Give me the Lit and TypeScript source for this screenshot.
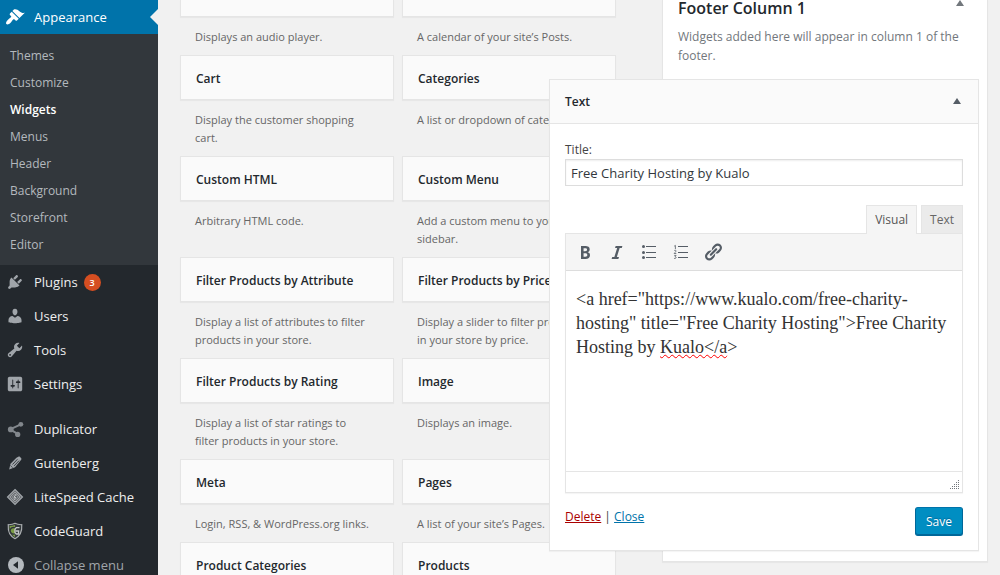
import { LitElement, html, css, svg, nothing } from 'lit';
import { customElement, property, state } from 'lit/decorators.js';
import { classMap } from 'lit/directives/class-map.js';

const icon = (body: unknown) => html`<svg viewBox="0 0 20 20" width="20" height="20" aria-hidden="true">${body}</svg>`;

const ICONS: Record<string, unknown> = {
  appearance: svg`<path fill="currentColor" d="M14.480 11.060L7.410 3.990l1.500-1.500c.5-.56 2.300-.47 3.510.32 1.210.8 1.430 1.280 2.910 2.100 1.180.64 2.450 1.260 4.450.85zm-.71.71L6.700 4.700 4.930 6.470c-.39.39-.39 1.020 0 1.410l1.060 1.060c.39.39.39 1.030 0 1.420-.6.6-1.430 1.110-2.210 1.690-.35.26-.7.53-1.010.84C1.430 14.230.4 16.080 1.400 17.070c.99 1 2.840-.03 4.180-1.360.31-.31.58-.66.85-1.020.57-.78 1.080-1.610 1.690-2.210.39-.39 1.020-.39 1.410 0l1.060 1.060c.39.39 1.020.39 1.410 0z"/>`,
  plugins: svg`<path fill="currentColor" d="M13.110 4.360L9.870 7.600 8 5.730l3.240-3.240c.35-.34 1.050-.2 1.560.32.52.51.66 1.210.31 1.550zm-8 1.770l.91-1.120 9.010 9.010-1.190.84c-.71.71-2.630 1.160-3.820 1.160H6.140L4.900 17.260c-.59.59-1.540.59-2.120 0-.59-.58-.59-1.530 0-2.120l1.240-1.240v-3.880c0-1.130.4-3.190 1.090-3.890zm7.260 3.970l3.240-3.240c.34-.35 1.040-.21 1.550.31.52.51.66 1.210.31 1.550l-3.240 3.250z"/>`,
  users: svg`<path fill="currentColor" d="M10 9.250c-2.270 0-2.730-3.440-2.730-3.440C7 4.020 7.820 2 9.970 2c2.160 0 2.980 2.020 2.710 3.810 0 0-.41 3.440-2.680 3.440zm0 2.570L12.720 10c2.390 0 4.520 2.330 4.520 4.530v2.490s-3.650 1.130-7.240 1.130c-3.650 0-7.240-1.130-7.240-1.130v-2.490c0-2.250 1.940-4.480 4.470-4.480z"/>`,
  tools: svg`<path fill="currentColor" d="M16.680 9.770c-1.340 1.340-3.300 1.670-4.950.99l-5.410 6.520c-.99.99-2.590.99-3.580 0s-.99-2.590 0-3.570l6.520-5.420c-.68-1.650-.35-3.610.99-4.950 1.280-1.280 3.120-1.620 4.720-1.060l-2.890 2.890 2.820 2.820 2.860-2.870c.53 1.580.18 3.390-1.080 4.650zM3.810 16.210c.4.39 1.040.39 1.430 0 .4-.4.4-1.040 0-1.430-.39-.4-1.030-.4-1.430 0-.39.39-.39 1.030 0 1.430z"/>`,
  settings: svg`<path fill="currentColor" fill-rule="evenodd" d="M18 16V4c0-1.100-.9-2-2-2H4c-1.100 0-2 .9-2 2v12c0 1.100.9 2 2 2h12c1.100 0 2-.9 2-2zM8 11h1c.55 0 1 .45 1 1s-.45 1-1 1H8v1.500c0 .28-.22.5-.5.5s-.5-.22-.5-.5V13H6c-.55 0-1-.45-1-1s.45-1 1-1h1V5.500c0-.28.22-.5.5-.5s.5.22.5.5V11zm5-2h-1c-.55 0-1-.45-1-1s.45-1 1-1h1V5.500c0-.28.22-.5.5-.5s.5.22.5.5V7h1c.55 0 1 .45 1 1s-.45 1-1 1h-1v5.500c0 .28-.22.5-.5.5s-.5-.22-.5-.5V9z"/>`,
  duplicator: svg`<g fill="#82878c"><path d="M4.500 10.500L16.500 4.800M4.500 10.500l8.500 5" stroke="#82878c" stroke-width="2.200"/><circle cx="16.500" cy="4.800" r="2.700"/><circle cx="5.300" cy="10.500" r="3.200"/><circle cx="13" cy="16" r="2.900"/></g>`,
  gutenberg: svg`<path fill="currentColor" d="M11.600 4.300 13.700 3.100c.8-.4 1.400-.3 1.900.2l1.100 1.100c.6.6.6 1.200.2 1.900L10 14.800l-6.500 2.400L5 10.900z"/><path d="M7.300 11.600l5.400-5.700M9 13.200l5.500-5.800" stroke="#23282d" stroke-width=".9"/><path d="M4.800 12.700l2.600 2.500" stroke="#23282d" stroke-width=".7"/>`,
  litespeed: svg`<g transform="translate(10 10)" fill="none" stroke="currentColor"><path d="M0-8.300 8.300 0 0 8.300-8.300 0z" fill="#6d7073" stroke-width="1.300"/><path d="M0-5.600 5.600 0 0 5.600-5.600 0z" stroke-width="1"/><path d="M0-3.200 3.200 0 0 3.200-3.200 0z" fill="#55595d" stroke-width=".7"/><path d="M1.200-3-1.300.3H1L-.9 3" stroke="#d5d7d9" stroke-width="1"/></g>`,
  codeguard: svg`<path d="M10 1.500c2.300 1.200 4.800 1.600 7.500 1.500.5 7.200-1.300 12.400-7.500 15.500C3.800 15.400 2 10.200 2.500 3c2.700.1 5.200-.3 7.500-1.500z" fill="#343a3d" stroke="#a9adaf" stroke-width="1.300"/><path d="M10 3.300v13.300C5.200 14 3.900 9.900 4 4.500c2.200 0 4.100-.4 6-1.200z" fill="#7a9b45"/><path d="M10 6.500A3.700 3.700 0 1 0 10 13" fill="none" stroke="#30363a" stroke-width="1.600"/><path d="M15 6.300h-3.500L10 8v4l1.500 1.300H14V10h-3" fill="none" stroke="#c3c6c8" stroke-width="1.500"/>`,
  collapse: svg`<circle cx="11" cy="10" r="8" fill="currentColor"/><path d="M13 6.200v7.600L8 10z" fill="#23282d"/>`,
  bold: svg`<path fill="currentColor" d="M6 4v13h4.540c1.370 0 2.460-.33 3.260-1 .8-.66 1.200-1.580 1.200-2.770 0-.84-.17-1.510-.51-2.010s-.9-.85-1.670-1.030v-.09c.57-.1 1.020-.4 1.360-.9s.51-1.130.51-1.910c0-1.140-.39-1.980-1.170-2.500C12.750 4.260 11.500 4 9.780 4H6zm2.570 5.150V6.260h1.360c.73 0 1.270.11 1.610.32.34.22.51.58.51 1.070 0 .54-.16.92-.47 1.150s-.82.35-1.510.35h-1.500zm0 2.190h1.600c1.440 0 2.160.53 2.160 1.610 0 .6-.17 1.050-.51 1.340s-.86.43-1.570.43H8.570v-3.380z"/>`,
  italic: svg`<path fill="currentColor" d="M14.780 6h-2.130l-2.800 9h2.120l-.62 2H4.600l.62-2h2.140l2.800-9H8.030l.62-2h6.750z"/>`,
  bullets: svg`<path fill="currentColor" d="M7 4h10v1H7zM7 10h10v1H7zM7 15h10v1H7z"/><g fill="currentColor"><circle cx="4.500" cy="4.500" r="1.500"/><circle cx="4.500" cy="10.500" r="1.500"/><circle cx="4.500" cy="15.500" r="1.500"/></g>`,
  numbers: svg`<path fill="currentColor" d="M7 4h10v1H7zM7 10h10v1H7zM7 15h10v1H7z"/><path fill="none" stroke="currentColor" stroke-width=".8" d="M3.200 4.200 4.400 3.400V7M3.200 8.700c.6-.8 2-.6 1.900.4 0 .8-1.900 1.600-1.900 2.400h2.100M3.200 13.400h1.900L4 14.700c1.700 0 1.500 2.200-.9 1.700"/>`,
  link: svg`<path fill="currentColor" d="M17.740 2.760c1.680 1.690 1.680 4.410 0 6.100l-1.530 1.520c-1.120 1.120-2.700 1.470-4.140 1.090l2.620-2.610.76-.77.76-.76c.84-.84.84-2.200 0-3.040-.84-.85-2.200-.85-3.040 0l-.77.76-3.380 3.380c-.37-1.440-.02-3.020 1.100-4.140l1.520-1.530c1.690-1.680 4.420-1.680 6.100 0zM8.590 13.430l5.340-5.340c.42-.42.42-1.100 0-1.520-.44-.43-1.130-.39-1.530 0l-5.330 5.340c-.42.42-.42 1.100 0 1.520.44.43 1.130.39 1.520 0zm-.76 2.290l4.140-4.150c.38 1.440.03 3.020-1.090 4.140l-1.520 1.530c-1.690 1.680-4.410 1.680-6.100 0-1.680-1.680-1.680-4.420 0-6.100l1.530-1.520c1.120-1.120 2.700-1.470 4.140-1.100l-4.140 4.150c-.85.84-.85 2.200 0 3.050.84.84 2.200.84 3.040 0z"/>`,
};

@customElement('admin-menu')
class AdminMenu extends LitElement {
  static styles = css`
    :host { display: block; background: #23282d; color: #eee; }
    a, button { font: 13px/18px "Open Sans", sans-serif; color: inherit; text-decoration: none; }
    .item { display: flex; align-items: center; height: 34px; padding: 0 5px; gap: 9px; }
    .item svg { flex: none; color: #a0a5aa; }
    .small svg { padding: 1px; width: 18px; height: 18px; }
    .current { background: #0073aa; color: #fff; justify-content: flex-start; padding-right: 0; }
    .current svg { color: #fff; }
    .arrow { margin-left: auto; border: 8px solid transparent; border-left: 0; border-right-color: #f1f1f1; }
    .submenu { list-style: none; margin: 0; padding: 8px 0 7px; background: #32373c; }
    .submenu a { display: block; padding: 0 10px; font-size: 12px; line-height: 27px; color: #b4b9be; }
    .submenu .active { color: #fff; font-weight: 600; }
    .group { margin-bottom: 11px; }
    .badge { margin-left: -3px; width: 17px; height: 17px; border-radius: 9px; background: #d54e21; color: #fff; font-size: 9px; line-height: 17px; font-weight: 600; text-align: center; }
    button.item { width: 100%; border: 0; background: none; color: #a0a5aa; text-align: left; }
    button.item svg { color: #b4b9be; }
  `;
  private link(name: string, label: string, badge?: string) {
    return html`<a class="item small" href="#${name}">${icon(ICONS[name])}<span>${label}</span>${badge ? html`<span class="badge">${badge}</span>` : nothing}</a>`;
  }
  render() {
    const sub = ['Themes', 'Customize', 'Widgets', 'Menus', 'Header', 'Background', 'Storefront', 'Editor'];
    return html`<nav>
      <a class="item current" href="#appearance">${icon(ICONS.appearance)}<span>Appearance</span><span class="arrow"></span></a>
      <ul class="submenu">${sub.map(s => html`<li><a href="#${s}" class=${classMap({ active: s === 'Widgets' })}>${s}</a></li>`)}</ul>
      <div class="group">
        ${this.link('plugins', 'Plugins', '3')}${this.link('users', 'Users')}${this.link('tools', 'Tools')}${this.link('settings', 'Settings')}
      </div>
      ${this.link('duplicator', 'Duplicator')}${this.link('gutenberg', 'Gutenberg')}${this.link('litespeed', 'LiteSpeed Cache')}${this.link('codeguard', 'CodeGuard')}
      <button class="item" type="button">${icon(ICONS.collapse)}<span>Collapse menu</span></button>
    </nav>`;
  }
}

@customElement('widget-card')
class WidgetCard extends LitElement {
  @property() name = '';
  @property() description = '';
  static styles = css`
    :host { display: block; min-width: 0; }
    .top { box-sizing: border-box; height: 45px; border: 1px solid #e5e5e5; box-shadow: 0 1px 1px rgba(0, 0, 0, .04); background: #fafafa; padding: 0 15px; }
    .tail { height: 17px; border-top: 0; }
    h3 { margin: 0; font-size: 12px; line-height: 45px; font-weight: 600; color: #23282d; white-space: nowrap; }
    p { margin: 0; padding: 11px 24px 9px 15px; font-size: 11px; line-height: 18px; color: #666; }
  `;
  render() {
    return html`<div class="top ${this.name ? '' : 'tail'}">${this.name ? html`<h3>${this.name}</h3>` : nothing}</div>
      ${this.description ? html`<p>${this.description}</p>` : nothing}`;
  }
}

@customElement('text-widget')
class TextWidget extends LitElement {
  @state() private tab = 'Visual';
  static styles = css`
    :host { display: block; box-sizing: border-box; border: 1px solid #e5e5e5; background: #fff; box-shadow: 0 1px 1px rgba(0, 0, 0, .04); }
    header { display: flex; align-items: center; justify-content: space-between; height: 43px; padding: 0 15px; background: #fafafa; border-bottom: 1px solid #e5e5e5; }
    h3 { margin: 0; font-size: 12px; line-height: 18px; font-weight: 600; color: #23282d; }
    button { font: 12px/18px "Open Sans", sans-serif; }
    .toggle { display: flex; margin-right: 1px; padding: 0; border: 0; background: none; color: #555d66; }
    .body { padding: 17px 15px 14px; }
    label { display: block; font-size: 12px; line-height: 18px; color: #444; }
    input { display: block; box-sizing: border-box; width: 100%; height: 27px; padding: 0 5px; border: 1px solid #ddd; box-shadow: inset 0 1px 2px rgba(0, 0, 0, .07); font: 13px "Open Sans", sans-serif; color: #32373c; background: #fff; outline: 0; }
    .tabs { display: flex; justify-content: flex-end; gap: 4px; margin-top: 19px; }
    .tabs button { height: 28px; padding: 0 8px; border: 1px solid #e5e5e5; border-bottom: 0; background: #ebebeb; color: #666; }
    .tabs .on { position: relative; height: 29px; margin-bottom: -1px; background: #f5f5f5; color: #555; }
    .editor { border: 1px solid #e5e5e5; box-shadow: 0 1px 1px rgba(0, 0, 0, .04); }
    .toolbar { display: flex; gap: 12px; height: 36px; align-items: center; padding: 0 9px; border-bottom: 1px solid #ddd; background: #f5f5f5; color: #555d66; }
    .toolbar button { display: flex; padding: 0; border: 0; background: none; color: inherit; }
    .content { min-height: 168px; padding: 16px 10px; font: 18px/24px "Liberation Serif", serif; color: #333; outline: 0; }
    .spell { text-decoration: underline wavy #f00 1px; text-underline-offset: 1px; }
    .status { display: flex; justify-content: flex-end; align-items: flex-end; height: 20px; padding: 0 2px 0 0; border-top: 1px solid #e5e5e5; }
    .status svg { margin-bottom: 2px; }
    footer { display: flex; justify-content: space-between; align-items: flex-start; margin-top: 14px; font-size: 12px; line-height: 20px; color: #444; }
    footer a { color: #0073aa; }
    footer .delete { color: #a00; }
    .save { height: 29px; padding: 0 10px; border: 1px solid #006799; border-top-color: #0073aa; border-radius: 3px; background: #008ec2; box-shadow: inset 0 -1px 0 #006799; color: #fff; text-shadow: 0 -1px 1px #006799; }
  `;
  render() {
    const dots = [[8, 0], [8, 2], [6, 2], [8, 4], [6, 4], [4, 4], [8, 6], [6, 6], [4, 6], [2, 6], [8, 8], [6, 8], [4, 8], [2, 8], [0, 8]];
    return html`
      <header><h3>Text</h3><button class="toggle" type="button" aria-label="Toggle Text widget"><svg width="10" height="8"><path d="M5 0l4 6H1z" fill="currentColor"/></svg></button></header>
      <div class="body">
        <label for="title">Title:</label>
        <input id="title" type="text" value="Free Charity Hosting by Kualo">
        <div class="tabs">${['Visual', 'Text'].map(t => html`<button type="button" class=${classMap({ on: this.tab === t })} @click=${() => { this.tab = t; }}>${t}</button>`)}</div>
        <div class="editor">
          <div class="toolbar">${['bold', 'italic', 'bullets', 'numbers', 'link'].map(n => html`<button type="button" aria-label=${n}>${icon(ICONS[n])}</button>`)}</div>
          <div class="content" role="textbox" aria-label="Content" contenteditable="true" spellcheck="false">&lt;a href="https://www.kualo.com/free-charity-hosting" title="Free Charity Hosting"&gt;Free Charity Hosting by <span class="spell">Kualo&lt;/a</span>&gt;</div>
          <div class="status"><svg width="10" height="10" fill="#72777c">${dots.map(([x, y]) => svg`<rect x=${x} y=${y} width="1" height="1"/>`)}</svg></div>
        </div>
        <footer><span><a class="delete" href="#delete">Delete</a> | <a href="#close">Close</a></span><button class="save" type="button">Save</button></footer>
      </div>`;
  }
}

@customElement('app-root')
class AppRoot extends LitElement {
  static styles = css`
    :host { display: grid; grid-template-columns: 158px 1fr; height: 100vh; overflow: hidden; background: #f1f1f1; color: #444; font: 12px/18px "Open Sans", sans-serif; }
    main { display: grid; grid-template-columns: 436fr 326fr; gap: 46px; align-items: start; min-width: 0; padding: 0 12px 0 22px; }
    .available { display: grid; grid-template-columns: 1fr 1fr; column-gap: 8px; }
    .area { box-sizing: border-box; min-width: 0; padding: 0 8px 10px; border: 1px solid #e5e5e5; border-top: 0; background: #fff; box-shadow: 0 1px 1px rgba(0, 0, 0, .04); }
    .heading { display: flex; justify-content: space-between; align-items: flex-start; padding: 0 14px 0 7px; }
    h2 { margin: 0; font-size: 16px; line-height: 16px; font-weight: 600; color: #23282d; }
    .caret { display: flex; padding: 0; border: 0; background: none; color: #72777c; }
    .area p { margin: 0; padding: 11px 7px 14px; line-height: 19px; color: #72777c; }
    text-widget { position: relative; margin-left: -122px; }
  `;
  render() {
    const cards: [string, string][] = [
      ['', 'Displays an audio player.'], ['', 'A calendar of your site’s Posts.'],
      ['Cart', 'Display the customer shopping cart.'], ['Categories', 'A list or dropdown of categories.'],
      ['Custom HTML', 'Arbitrary HTML code.'], ['Custom Menu', 'Add a custom menu to your sidebar.'],
      ['Filter Products by Attribute', 'Display a list of attributes to filter products in your store.'], ['Filter Products by Price', 'Display a slider to filter products in your store by price.'],
      ['Filter Products by Rating', 'Display a list of star ratings to filter products in your store.'], ['Image', 'Displays an image.'],
      ['Meta', 'Login, RSS, & WordPress.org links.'], ['Pages', 'A list of your site’s Pages.'],
      ['Product Categories', ''], ['Products', ''],
    ];
    return html`
      <admin-menu></admin-menu>
      <main>
        <section class="available">${cards.map(([n, d]) => html`<widget-card .name=${n} .description=${d}></widget-card>`)}</section>
        <section class="area">
          <div class="heading"><h2>Footer Column 1</h2><button class="caret" type="button" aria-label="Toggle Footer Column 1"><svg width="10" height="6"><path d="M5 0l4 6H1z" fill="currentColor"/></svg></button></div>
          <p>Widgets added here will appear in column 1 of the footer.</p>
          <text-widget></text-widget>
        </section>
      </main>`;
  }
}
